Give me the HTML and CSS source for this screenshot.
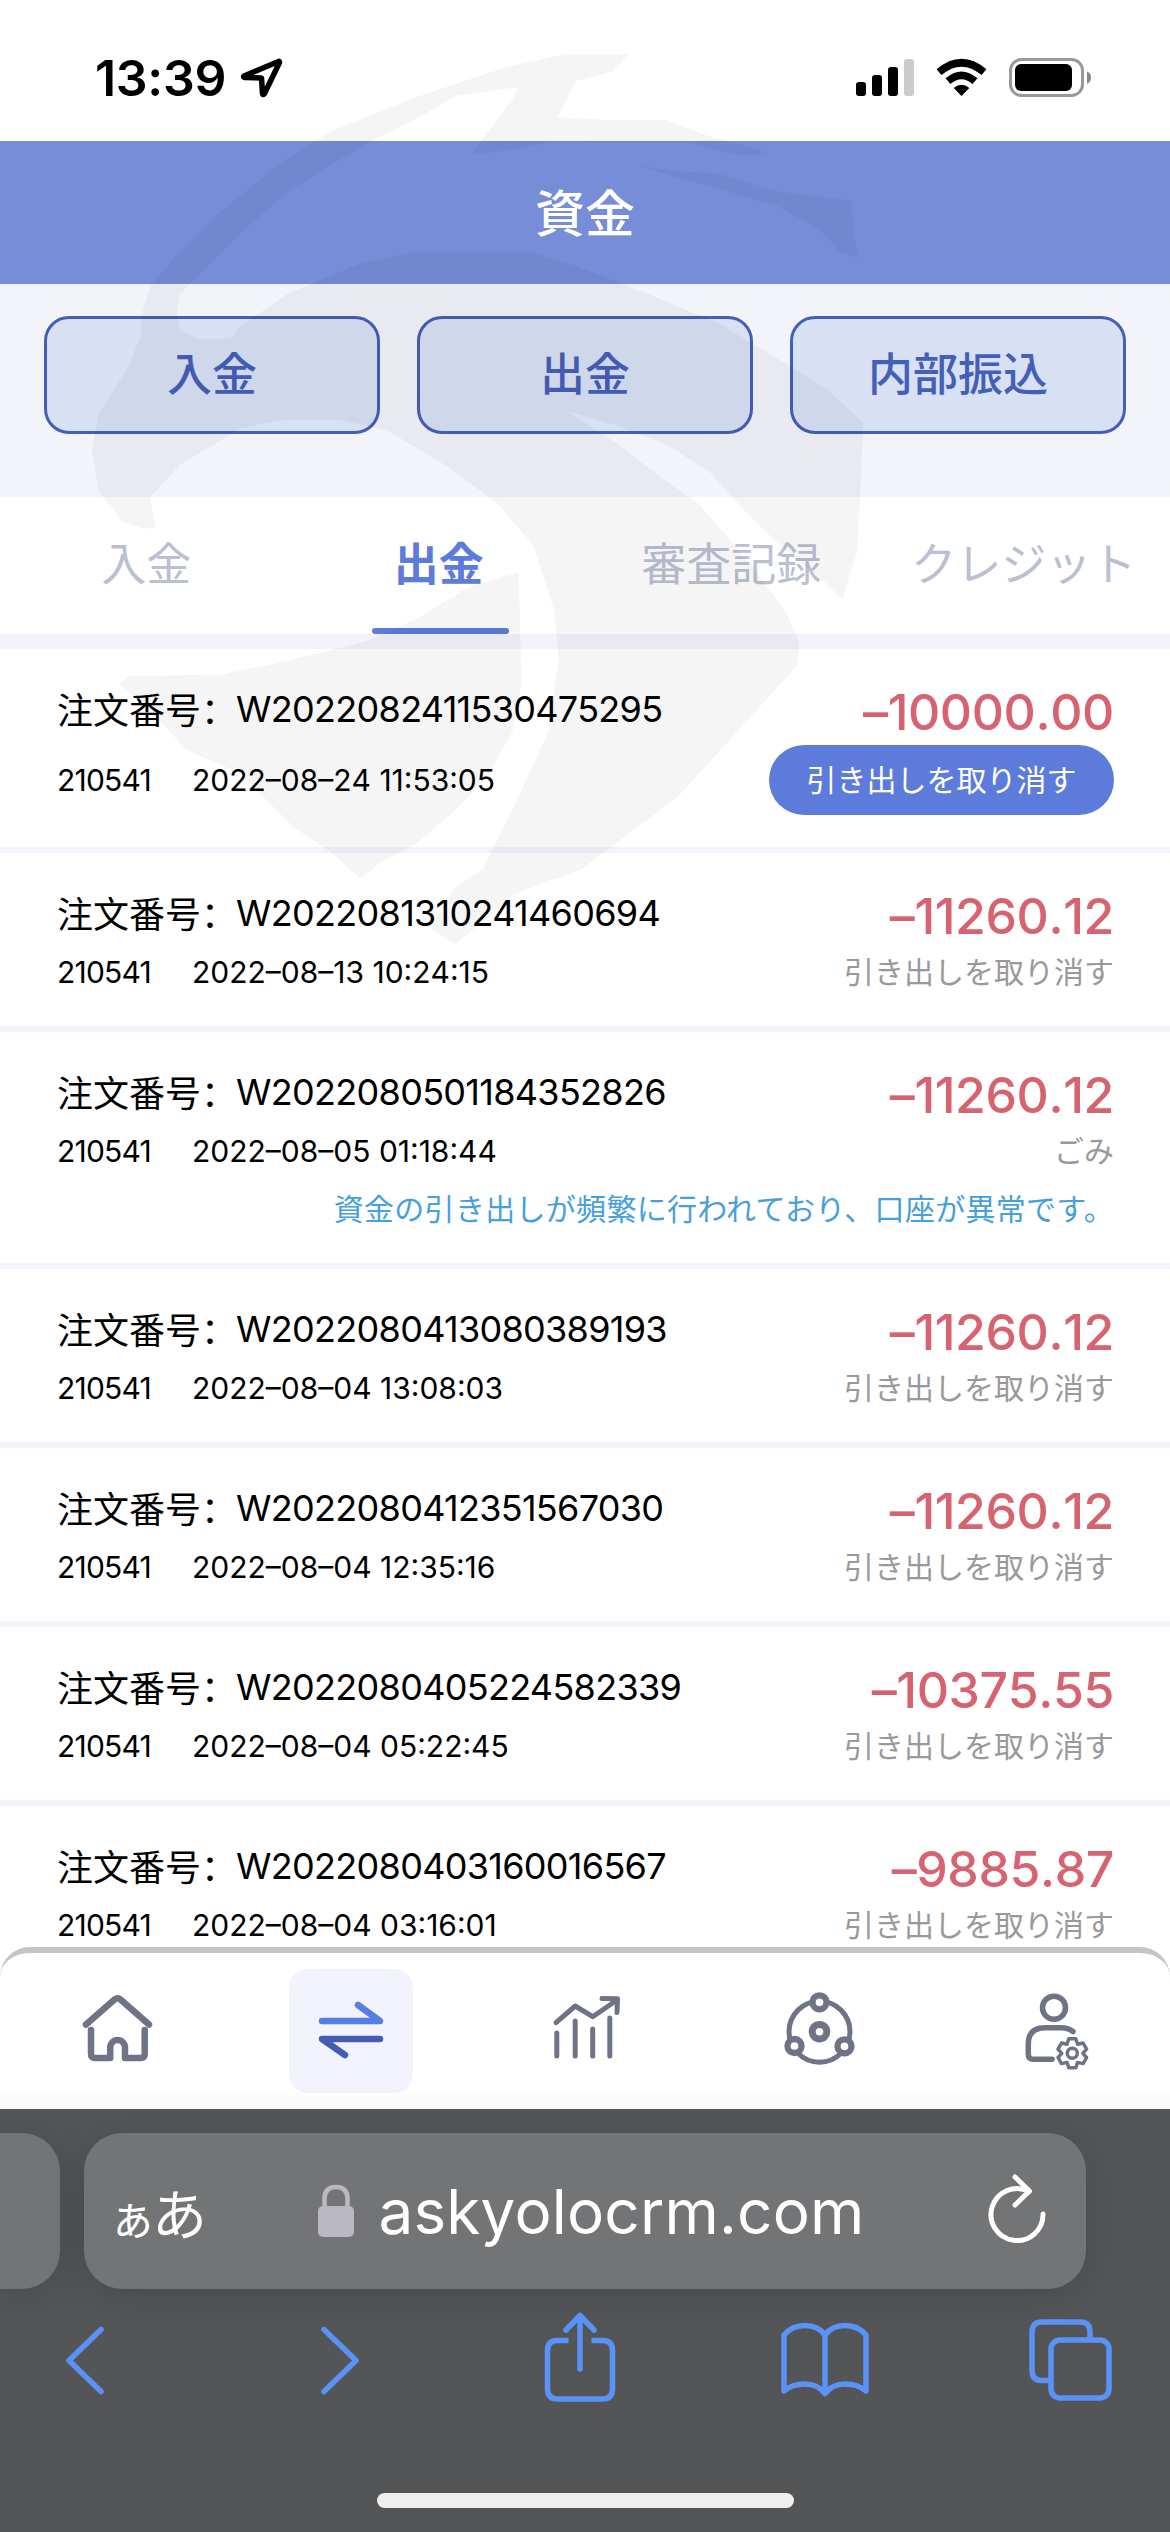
FILE: index.html
```html
<!DOCTYPE html>
<html lang="ja">
<head>
	<meta charset="utf-8">
	<title>資金</title>
	<link rel="stylesheet" href="styles.css">
</head>
<body>
	<div class="status_bar">
		<div class="status_left">
			<span class="time">13:39</span>
			<svg class="location" width="44" height="44" viewBox="0 0 44 44"><path d="M38.500 5.500L4 20Q3 21 5 21.500L21.500 22L22.500 37.500Q23 39.500 24.500 37.500L39.500 6.500Q39.500 5 38.500 5.500Z"/></svg>
		</div>
		<svg class="status_icons" width="240" height="44" viewBox="0 0 240 44">
			<rect x="1" y="28" width="10" height="14" rx="3"/>
			<rect x="17" y="21" width="10" height="21" rx="3"/>
			<rect x="33" y="13" width="10" height="29" rx="3"/>
			<rect x="49" y="5" width="10" height="37" rx="3" fill="#ccc"/>
			<g fill="none" stroke="#000" stroke-width="7.500">
				<path d="M84 18.200Q106.500 -.700 129 18.200"/>
				<path d="M93 27.200Q106.500 15.500 120 27.200"/>
			</g>
			<path d="M98.700 34Q106.500 27.500 114.300 34L106.500 42Z"/>
			<rect x="155.500" y="5.500" width="72" height="36" rx="11" fill="none" stroke="#999" stroke-width="3"/>
			<rect x="160" y="10" width="57" height="27" rx="6"/>
			<path d="M232 17.500Q236 19 236 23.500T232 30Z" fill="#888"/>
		</svg>
	</div>

	<div class="header">資金</div>

	<div class="actions">
		<div class="action_btn">入金</div>
		<div class="action_btn">出金</div>
		<div class="action_btn">内部振込</div>
	</div>

	<div class="tabs">
		<div class="tab">入金</div>
		<div class="tab active">出金</div>
		<div class="tab">審査記録</div>
		<div class="tab">クレジット</div>
	</div>

	<div class="list">
		<div class="item">
			<div class="row"><span class="order"><em lang="zh-CN">注文番号：</em><b>W2022082411530475295</b></span><span class="amount">–10000.00</span></div>
			<div class="row row_btn"><span class="date"><i>210541</i>2022–08–24 11:53:05</span><span class="cancel_btn">引き出しを取り消す</span></div>
		</div>
		<div class="item">
			<div class="row"><span class="order"><em lang="zh-CN">注文番号：</em><b>W2022081310241460694</b></span><span class="amount">–11260.12</span></div>
			<div class="row"><span class="date"><i>210541</i>2022–08–13 10:24:15</span><span class="state">引き出しを取り消す</span></div>
		</div>
		<div class="item">
			<div class="row"><span class="order"><em lang="zh-CN">注文番号：</em><b>W2022080501184352826</b></span><span class="amount">–11260.12</span></div>
			<div class="row"><span class="date"><i>210541</i>2022–08–05 01:18:44</span><span class="state">ごみ</span></div>
			<div class="note">資金の引き出しが頻繁に行われており、口座が異常です。</div>
		</div>
		<div class="item">
			<div class="row"><span class="order"><em lang="zh-CN">注文番号：</em><b>W2022080413080389193</b></span><span class="amount">–11260.12</span></div>
			<div class="row"><span class="date"><i>210541</i>2022–08–04 13:08:03</span><span class="state">引き出しを取り消す</span></div>
		</div>
		<div class="item">
			<div class="row"><span class="order"><em lang="zh-CN">注文番号：</em><b>W2022080412351567030</b></span><span class="amount">–11260.12</span></div>
			<div class="row"><span class="date"><i>210541</i>2022–08–04 12:35:16</span><span class="state">引き出しを取り消す</span></div>
		</div>
		<div class="item">
			<div class="row"><span class="order"><em lang="zh-CN">注文番号：</em><b>W2022080405224582339</b></span><span class="amount">–10375.55</span></div>
			<div class="row"><span class="date"><i>210541</i>2022–08–04 05:22:45</span><span class="state">引き出しを取り消す</span></div>
		</div>
		<div class="item">
			<div class="row"><span class="order"><em lang="zh-CN">注文番号：</em><b>W2022080403160016567</b></span><span class="amount">–9885.87</span></div>
			<div class="row"><span class="date"><i>210541</i>2022–08–04 03:16:01</span><span class="state">引き出しを取り消す</span></div>
		</div>
	</div>

	<div class="nav">
		<div class="nav_item">
			<svg viewBox="0 0 124 124"><g stroke-width="6.500"><path d="M31 55.500L59.500 30.500Q62.500 28 65.500 30.500L94 55.500"/><path d="M36 61V85Q36 89 40 89H55.200V78.500A7.400 7.400 0 0 1 70 78.500V89H85.700Q89.700 89 89.700 85V61"/></g></svg>
		</div>
		<div class="nav_item on">
			<svg viewBox="0 0 124 124"><path d="M33 52H91L69 36" stroke="#567fe2" stroke-width="6.500"/><path d="M91 70H33L56 86" stroke="#455cb3" stroke-width="6.500"/></svg>
		</div>
		<div class="nav_item">
			<svg viewBox="0 0 124 124"><g stroke-width="5"><path d="M33 53.700L52.200 37L69.700 47.700L94 31"/><path d="M79 29.500L94.500 29.700L94 43.500"/><path d="M33.800 64V87M52.200 52V87M69.700 60V87M86.800 49V87"/></g></svg>
		</div>
		<div class="nav_item">
			<svg viewBox="0 0 124 124"><circle cx="62.500" cy="62.700" r="30.500" stroke-width="5"/><circle cx="62.500" cy="62.700" r="7.300" stroke-width="7"/><g fill="#fff" stroke-width="6.300"><circle cx="62.500" cy="33.300" r="7"/><circle cx="37.500" cy="77" r="7"/><circle cx="87.500" cy="77.300" r="7"/></g></svg>
		</div>
		<div class="nav_item">
			<svg viewBox="0 0 124 124"><g stroke-width="5.500"><circle cx="63" cy="38.700" r="11.500"/><path d="M61 90.300H42.500Q37.300 90.300 37.300 85V75Q37.300 58.700 54 58.700H70Q77 58.700 82 62.500"/></g><g stroke-width="3.500" transform="translate(81.300 84.300)"><path d="M-3.500-14.500H3.500L5.300-9.100L10.800-10.300L14.300-4.200L10.500 0L14.300 4.200L10.800 10.300L5.300 9.100L3.500 14.500H-3.500L-5.300 9.100L-10.800 10.300L-14.300 4.200L-10.500 0L-14.300-4.200L-10.800-10.300L-5.300-9.100Z"/><circle r="5"/></g></svg>
		</div>
	</div>

	<div class="browser">
		<div class="address_row">
			<div class="prev_page"></div>
			<div class="address">
				<span class="lang"><small>ぁ</small>あ</span>
				<div class="url">
					<svg width="36" height="54" viewBox="0 0 36 54"><rect y="22" width="36" height="31" rx="5" fill="#bab9c1"/><path d="M6.500 24V15Q6.500 3 18 3T29.500 15V24" fill="none" stroke="#bab9c1" stroke-width="4.500"/></svg>
					<span>askyolocrm.com</span>
				</div>
				<svg class="reload" width="60" height="70" viewBox="0 0 60 70"><path d="M55 40A26 26 0 1 1 41 17.500"/><path d="M27 3L41.500 17L27 31"/></svg>
			</div>
		</div>
		<div class="toolbar">
			<svg width="90" height="100" viewBox="0 0 90 100"><path d="M36 21.500L4 52.500L36 83.500"/></svg>
			<svg width="90" height="100" viewBox="0 0 90 100"><path d="M19 21.500L51 52.500L19 83.500"/></svg>
			<svg width="90" height="100" viewBox="10 0 90 100"><path d="M33.500 32.500H22.500Q12.500 32.500 12.500 42.500V81Q12.500 91 22.500 91H67.500Q77.500 91 77.500 81V42.500Q77.500 32.500 67.500 32.500H56.500" stroke-linecap="butt"/><path d="M31 22L45 7.500L59 22M45 61V9"/></svg>
			<svg width="90" height="100" viewBox="5 0 90 100"><path d="M45 27Q38 17.500 25 17.500T4 27V83Q12 76 25 76T45 85.500Q52 76 65 76T86 83V27Q78 17.500 65 17.500T45 27V85"/></svg>
			<svg width="90" height="100" viewBox="1 0 90 100"><path d="M25 72.500H18Q8 72.500 8 62.500V24Q8 14 18 14H56Q66 14 66 24V31"/><rect x="27" y="32" width="58" height="58" rx="9"/></svg>
		</div>
		<div class="home_indicator"></div>
	</div>

	<!-- eagle watermark over the page -->
	<svg class="watermark" viewBox="0 0 1568 1568">
		<path d="M1050 40H945L850 60L700 110L550 170L470 220L360 310L290 380L250 430L235 480V510L215 560L165 640L153 700L165 770L205 820L240 832L260 830L250 780L300 725L400 665L470 650H570L650 670L750 730L830 790L890 860L925 970L932 1050L915 1170L860 1290L805 1400L760 1430L735 1470L720 1500L760 1525L860 1440L970 1400L1130 1280L1230 1170L1330 1060L1333 1020L1310 970L1270 915L1230 865L1165 790L1100 745L1030 690L945 635L1030 660L1110 690L1185 738L1240 800L1310 868L1370 915L1405 950L1430 870L1440 655L1380 600L1300 550L1200 490L1080 440L950 390L885 370H690L600 390L480 440L400 495L385 515H330L300 500L295 470L300 440L340 400L400 340L480 270L560 220L620 185L700 145L760 110L865 95L855 115L825 155L800 190L785 208L850 200L925 187L1150 188L1225 208H1285L1250 195L1190 180L1110 150H1010L930 146L960 85L1020 70Z"/>
		<path d="M1065 225L1110 233L1200 240L1300 270L1420 285L1430 380L1400 370L1370 335L1300 295L1200 265L1110 240Z"/>
		<path d="M865 905L870 1090L855 1170L810 1250L750 1310L690 1360L640 1385L600 1415L550 1370L490 1330L440 1280L400 1240L310 1200L265 1150L200 1090L215 1078L370 1075L480 1052L610 1020L700 980L780 930Z"/>
	</svg>
</body>
</html>
```

FILE: styles.css
```css
*{box-sizing:border-box;}
body{margin:0;width:1170px;height:2532px;overflow:hidden;position:relative;display:flex;flex-direction:column;background:#fff;color:#000;font-family:Inter,"Noto Sans CJK JP",sans-serif;}
svg{display:block;flex:none;}

.status_bar{height:141px;flex:none;display:flex;justify-content:space-between;padding:54px 75px 0 95px;}
.status_left{display:flex;height:48px;align-items:center;}
.time{font-size:50px;font-weight:600;line-height:48px;letter-spacing:-0.3px;}
.location{margin-left:14px;fill:none;stroke:#000;stroke-width:5.500;stroke-linejoin:round;}

.header{height:143px;flex:none;background:#778dd8;color:#fff;font-size:50px;font-weight:500;line-height:147px;text-align:center;}

.actions{height:213px;flex:none;background:#f2f4f9;padding:32px 44px 0;display:flex;gap:37px;}
.action_btn{flex:1;height:118px;border:3px solid #455fb8;border-radius:25px;background:#d8e0f4;color:#455fb8;font-size:45px;font-weight:500;line-height:112px;text-align:center;}

.tabs{height:152px;flex:none;display:flex;border-bottom:15px solid #f2f4f9;}
.tab{flex:1;height:137px;padding-top:2px;display:flex;flex-direction:column;align-items:center;color:#bac0d2;font-size:45px;line-height:132px;white-space:nowrap;}
.active{color:#5d7bda;font-weight:700;}
.active::after{content:"";width:137px;height:6px;margin:-3px 0 0 4px;border-radius:3px;background:#5d7bda;}

.list{height:1298px;flex:none;overflow:hidden;}
.item{padding:33px 56px 26px 57px;border-bottom:6px solid #f2f4f9;}
.row{height:57px;display:flex;justify-content:space-between;align-items:center;white-space:nowrap;}
.order{font-size:36px;line-height:56px;display:flex;padding-bottom:5px;}
.order em{width:179px;font-style:normal;font-family:"Noto Sans CJK SC",sans-serif;}
.order b{font-weight:400;letter-spacing:-0.7px;padding-top:1px;}
.amount{font-size:50px;font-weight:500;color:#d6636f;letter-spacing:-0.4px;font-kerning:none;padding-top:2px;}
.date{font-size:30px;letter-spacing:0;font-kerning:none;}
.date i{display:inline-block;width:135px;font-style:normal;letter-spacing:-0.8px;font-kerning:normal;}
.state{font-size:30px;line-height:52px;color:#999;}
.row_btn{height:82px;}
.cancel_btn{width:345px;height:70px;border-radius:35px;background:#5d7bda;color:#fff;font-size:30px;line-height:70px;text-align:center;}
.note{height:58px;line-height:60px;font-size:30px;color:#46a0dc;text-align:right;white-space:nowrap;letter-spacing:0.3px;text-spacing-trim:space-all;}

.nav{height:162px;flex:none;display:flex;border-top:6px solid #c4c4c4;border-radius:30px 30px 0 0;padding-top:16px;background:linear-gradient(#fff 85%,#f8f8f8);}
.nav_item{flex:1;display:flex;justify-content:center;}
.nav_item svg{width:124px;height:124px;border-radius:19px;fill:none;stroke:#6e7385;stroke-linecap:round;stroke-linejoin:round;}
.on svg{background:#f2f3fc;}

.browser{height:423px;flex:none;background:#545557;display:flex;flex-direction:column;overflow:hidden;}
.address_row{display:flex;gap:24px;padding-top:24px;}
.prev_page{width:60px;height:156px;border-radius:0 38px 38px 0;background:#737476;box-shadow:0 6px 40px rgba(0,0,0,.14);}
.address{width:1002px;height:156px;border-radius:38px;background:#737476;box-shadow:0 6px 40px rgba(0,0,0,.14);display:flex;align-items:center;justify-content:space-between;padding:0 38px 0 25px;color:#fff;}
.lang{width:92px;font-size:55px;font-weight:400;white-space:nowrap;letter-spacing:-4px;}
.lang small{font-size:47px;}
.url{display:flex;align-items:center;gap:24px;font-size:62px;letter-spacing:0.2px;margin-left:-6px;}
.reload{margin-top:-4px;fill:none;stroke:#fff;stroke-width:5;stroke-linecap:round;stroke-linejoin:round;}
.toolbar{display:flex;justify-content:space-between;padding:19px 55px 0 65px;}
.toolbar svg{overflow:visible;fill:none;stroke:#5b92f8;stroke-width:5.500;stroke-linecap:round;stroke-linejoin:round;}
.home_indicator{width:417px;height:15px;border-radius:8px;background:#efefef;margin:85px auto 0;}

.watermark{position:absolute;left:0;top:30px;width:940px;height:940px;fill:#000;opacity:.037;pointer-events:none;}
```
